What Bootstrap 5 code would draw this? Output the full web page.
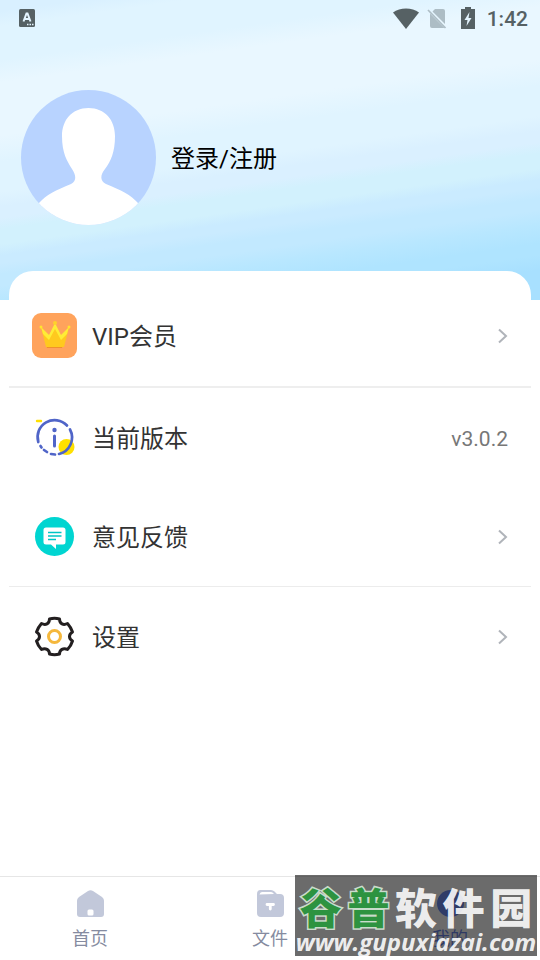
<!DOCTYPE html>
<html lang="zh-CN">
<head>
<meta charset="utf-8">
<meta name="viewport" content="width=device-width, initial-scale=1">
<title>我的</title>
<link href="https://cdn.jsdelivr.net/npm/bootstrap@5.3.0/dist/css/bootstrap.min.css" rel="stylesheet">
<style>
  body { font-family: Roboto, "Noto Sans CJK SC", sans-serif; font-size: 24px; line-height: 36px; color: #333; background: #fff; }
  .hero { height: 300px; background: linear-gradient(172deg, #d9f0ff 3%, #e0f4ff 7%, #e0f4ff 16%, #e9f7ff 22%, #e9f7ff 36%, #e0f4ff 43%, #e0f4ff 51%, #daf0ff 55%, #daf0ff 58%, #d2f1fd 61%, #d2f1fd 65%, #caebff 68%, #caebff 70%, #c2e9ff 73%, #c2e9ff 76%, #b8e7ff 80%, #afe4ff 85%, #afe4ff 88%, #a8e0ff 92%); }
  .status { height: 36px; padding: 0 12px 0 18px; color: #566164; }
  .clock { padding-top: 2px; font-size: 21px; font-weight: 500; }
  .status-icons { gap: 8px; }
  .battery { margin: 0 4px 0 6px; }
  .profile { padding: 54px 21px 0; gap: 15px; color: #000; }
  .panel { margin: -29px 9px 0; padding-top: 14px; border-radius: 24px 24px 0 0; background: #fff; }
  .item { height: 99px; padding: 0 23px; gap: 15px; color: #333; }
  .item-icon { width: 45px; }
  .caption { padding-top: 3px; }
  .rule { height: 100px; border-bottom: 1px solid #ececec; }
  .rule-thick { height: 103px; border-bottom: 2px solid #eee; }
  .version { padding-top: 3px; font-size: 21px; color: #777; }
  .tabs { height: 84px; border-top: 1px solid #e6e6e6; background: #fff; }
  .tab { padding-top: 13px; gap: 8px; font-size: 18px; line-height: 28px; color: #858ba0; }
  .tab-on { color: #5a78e8; }
  .stamp { right: 3px; bottom: 4px; width: 242px; height: 81px; background: rgba(20, 20, 20, .63); color: rgba(255, 255, 255, .9); pointer-events: none; }
  .stamp-name { font: 900 42px/42px "Noto Sans CJK SC", sans-serif; padding: 10px 2px 0; }
  .stamp-green { color: #2d9340; -webkit-text-stroke: 3px #c9dccb; paint-order: stroke fill; }
  .stamp-url { padding-top: 1px; font: italic 700 24px/28px "Open Sans", sans-serif; }
</style>
<script src="https://cdn.jsdelivr.net/npm/bootstrap@5.3.0/dist/js/bootstrap.bundle.min.js"></script>
</head>
<body>
<div class="min-vh-100 d-flex flex-column">
  <header class="hero">
    <div class="status d-flex align-items-center justify-content-between">
      <svg width="18" height="18" viewBox="0 0 18 18" aria-hidden="true"><rect x="1" width="16" height="18" rx="1.500" fill="#566164"/><path d="M5.500 12.500 8.500 4.500h1l3 8M6.500 10h5" fill="none" stroke="#e4f5ff" stroke-width="2"/><path d="M9 15.500h1.500m1 0h1.500m1 0h1.500" stroke="#e4f5ff" stroke-width="1.500"/></svg>
      <div class="status-icons d-flex align-items-center">
        <svg width="26" height="21" viewBox="0 0 26 21" aria-hidden="true"><path d="M0 4.500C7-1 19-1 26 4.500L13 21Z" fill="#566164"/></svg>
        <svg width="20" height="21" viewBox="0 0 20 21" aria-hidden="true"><path d="M8 1h8q2 0 2 2v13L5.500 3.500ZM3 5.500 17.500 20H5q-2 0-2-2Z" fill="#adbdc5"/><path d="M1 2 18.500 20" stroke="#adbdc5" stroke-width="1.700"/></svg>
        <svg class="battery" width="14" height="22" viewBox="0 0 14 22" aria-hidden="true"><path d="M0 2h4V0h6v2h4v20H0Z" fill="#566164"/><path d="M8.500 5 3.500 13H6.500L5.500 19l5-8H7.500Z" fill="#e4f5ff"/></svg>
        <span class="clock">1:42</span>
      </div>
    </div>
    <div class="profile d-flex align-items-center">
      <svg width="135" height="135" viewBox="0 0 135 135" role="img" aria-label="头像"><defs><clipPath id="face"><circle cx="67.500" cy="67.500" r="67.500"/></clipPath></defs><g clip-path="url(#face)"><path d="M0 0h135v135H0Z" fill="#b8d3ff"/><path d="M67.500 18C51 18 41 30 41 46c0 17 5 25 10 33 4 6 5 12-1 15-15 6-25 11-32 19v22h99v-22c-7-8-17-13-32-19-6-3-6-9-1-15 6-8 10-17 10-33C94 30 84 18 67.500 18Z" fill="#fff"/></g></svg>
      <a class="caption text-reset text-decoration-none" href="#login">登录/注册</a>
    </div>
  </header>

  <main class="panel flex-grow-1 position-relative">
    <a class="item rule-thick d-flex align-items-center text-decoration-none" href="#vip">
      <svg class="item-icon" height="45" viewBox="0 0 45 45" aria-hidden="true"><rect width="45" height="45" rx="9" fill="#ffa35c"/><path d="M14 32h17l-1 3H15Z" fill="#f0912c"/><path d="m9 14 8 10 6-13 6 13 8-10-5 20H14Z" fill="#ffc91f"/><path d="m9 14 8 8 6-12 6 12 8-8-2 7-6 6-6-11-6 11-6-6Z" fill="#ffec36"/><circle cx="9" cy="14" r="1.500" fill="#ffe52d"/><circle cx="23" cy="10" r="2" fill="#ffd12b"/><circle cx="37" cy="14" r="1.500" fill="#ffe52d"/></svg>
      <span class="caption">VIP会员</span>
      <svg class="ms-auto" width="10" height="16" viewBox="0 0 10 16" aria-hidden="true"><path d="m1 1.500 7 6.500-7 6.500" fill="none" stroke="#b0b4ba" stroke-width="2"/></svg>
    </a>
    <div class="item d-flex align-items-center">
      <svg class="item-icon" height="45" viewBox="0 0 45 45" aria-hidden="true"><circle cx="34.500" cy="32" r="8" fill="#ffe000"/><path d="M5 6h4" stroke="#ffe000" stroke-width="2.400" stroke-linecap="round"/><g fill="none" stroke="#5065c8" stroke-width="2.700" stroke-linecap="round"><path d="M6.300 27A17 17 0 0 1 35 10.500"/><path d="M38 14.500A17 17 0 0 1 27 39"/><path d="M8.500 31l1 1.500M12 35l3 2M19 39l4 .500"/><path d="M22.500 21v10" stroke-width="3"/></g><circle cx="22.500" cy="15" r="2.200" fill="#5065c8"/></svg>
      <span class="caption">当前版本</span>
      <span class="version ms-auto">v3.0.2</span>
    </div>
    <a class="item rule d-flex align-items-center text-decoration-none" href="#feedback">
      <svg class="item-icon" height="45" viewBox="0 0 45 45" aria-hidden="true"><circle cx="22.500" cy="22.500" r="19.500" fill="#00d5d1"/><path d="M14 13.500h17q2.500 0 2.500 2.500v12q0 2.500-2.500 2.500h-7V35l-5-4.500h-5q-2.500 0-2.500-2.500V16q0-2.500 2.500-2.500Z" fill="#fff"/><path d="M16 18.500h13.500M16 22h13.500M16 25.500h8" stroke="#00c5c5" stroke-width="1.300"/></svg>
      <span class="caption">意见反馈</span>
      <svg class="ms-auto" width="10" height="16" viewBox="0 0 10 16" aria-hidden="true"><path d="m1 1.500 7 6.500-7 6.500" fill="none" stroke="#b0b4ba" stroke-width="2"/></svg>
    </a>
    <a class="item d-flex align-items-center text-decoration-none" href="#settings">
      <svg class="item-icon" height="45" viewBox="0 0 45 45" aria-hidden="true"><path d="M17.500 5q5-1.500 10 0c0 5 4 6.500 8 4.500q3.500 4 5 8.500c-4 2.500-4 6.500 0 9q-1.500 5-5 8.500c-4-2-8 0-8 4.500q-5 1.500-10 0c0-4.500-4-6.500-8-4.500Q6 32 4.500 27c4-2.500 4-6.500 0-9q1.500-4.500 5-8.500c4 2 8 .500 8-4.500Z" fill="none" stroke="#231f20" stroke-width="3" stroke-linejoin="round"/><circle cx="22.500" cy="22.500" r="6" fill="none" stroke="#f5b83d" stroke-width="3"/></svg>
      <span class="caption">设置</span>
      <svg class="ms-auto" width="10" height="16" viewBox="0 0 10 16" aria-hidden="true"><path d="m1 1.500 7 6.500-7 6.500" fill="none" stroke="#b0b4ba" stroke-width="2"/></svg>
    </a>
  </main>

  <div class="sticky-bottom">
    <nav class="tabs row g-0" aria-label="主导航">
      <a class="tab col-4 d-flex flex-column align-items-center text-decoration-none" href="#home">
        <svg width="27" height="27" viewBox="0 0 27 27" aria-hidden="true"><path d="M11 1q2.500-1.500 5 0l9 6q2 1.500 2 3.500V24q0 3-3 3H3q-3 0-3-3V10.500Q0 8.500 2 7Z" fill="#c2c8da"/><rect x="10.500" y="19.500" width="6" height="6" rx="1.500" fill="#fff"/></svg>
        首页
      </a>
      <a class="tab col-4 d-flex flex-column align-items-center text-decoration-none" href="#files">
        <svg width="27" height="27" viewBox="0 0 27 27" aria-hidden="true"><path d="M3.500 0H14q2 0 3.500 1.500L20 4h3q4 0 4 4v15q0 4-4 4H4q-4 0-4-4V4q0-4 3.500-4Z" fill="#c2c8da"/><path d="M2.500 4.500Q3 2 5 2h9q1.500 0 3 2Z" fill="#fff"/><path d="M10 14.500h6.500M13.300 14.500V19" stroke="#fff" stroke-width="2.800" stroke-linecap="round"/></svg>
        文件
      </a>
      <a class="tab tab-on col-4 d-flex flex-column align-items-center text-decoration-none" href="#mine" aria-current="page">
        <svg width="27" height="27" viewBox="0 0 27 27" aria-hidden="true"><circle cx="13.500" cy="13.500" r="13.500" fill="#5c80f5"/></svg>
        我的
      </a>
    </nav>
    <div class="stamp position-absolute">
      <div class="stamp-name d-flex justify-content-around"><span class="stamp-green">谷</span><span class="stamp-green">普</span><span>软</span><span>件</span><span>园</span></div>
      <div class="stamp-url text-center">www.gupuxiazai.com</div>
    </div>
  </div>
</div>
</body>
</html>
